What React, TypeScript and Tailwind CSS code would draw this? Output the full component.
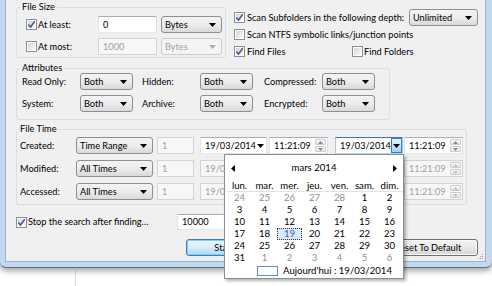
import React from "react";

type Dir = "down" | "up" | "left" | "right";

const Tri = ({ color = "#000", dir = "down", small = false }: { color?: string; dir?: Dir; small?: boolean }) => {
  const a = small ? 5 : 7;
  const b = small ? 3 : 4;
  const horiz = dir === "down" || dir === "up";
  const w = horiz ? a : b;
  const h = horiz ? b : a;
  const pts =
    dir === "down"
      ? `0,0 ${a},0 ${a / 2},${b}`
      : dir === "up"
      ? `0,${b} ${a},${b} ${a / 2},0`
      : dir === "left"
      ? `${b},0 ${b},${a} 0,${a / 2}`
      : `0,0 0,${a} ${b},${a / 2}`;
  return (
    <svg width={w} height={h} viewBox={`0 0 ${w} ${h}`} className="shrink-0 block">
      <polygon points={pts} fill={color} />
    </svg>
  );
};

const Check = ({ checked = false }: { checked?: boolean }) => (
  <span className="w-[11px] h-[11px] shrink-0 border border-[#8e8f8f] bg-white p-[1px] flex">
    <span className="relative flex-1 bg-gradient-to-br from-[#d6d6d6] to-[#f8f8f8]">
      {checked && (
        <svg width="9" height="9" viewBox="0 0 9 9" className="absolute -left-[1px] -top-[1px]">
          <path d="M1.3 4.4 L3.5 7 L7.8 1.2" stroke="#3c5a94" strokeWidth="1.5" fill="none" />
        </svg>
      )}
    </span>
  </span>
);

const Combo = ({ text, className = "", disabled = false }: { text: string; className?: string; disabled?: boolean }) => (
  <div
    className={`h-[17px] shrink-0 rounded-[3px] border flex items-center pl-[3px] pr-[5px] ${
      disabled
        ? "border-[#cacccd] bg-[#f4f4f4] text-[#a3a3a3]"
        : "border-[#8e8f8f] bg-gradient-to-b from-[#f4f4f4] via-[#ececec] to-[#dadada] text-black"
    } ${className}`}
  >
    <span className="flex-1">{text}</span>
    <Tri color={disabled ? "#b0b0b0" : "#000"} />
  </div>
);

const Edit = ({
  text,
  className = "",
  disabled = false,
  focused = false,
  children,
}: {
  text: string;
  className?: string;
  disabled?: boolean;
  focused?: boolean;
  children?: React.ReactNode;
}) => (
  <div
    className={`h-[17px] shrink-0 border flex items-center ${
      disabled
        ? "border-[#d3d3d3] bg-[#f7f7f7] text-[#a0a0a0]"
        : focused
        ? "border-[#3d7bad] border-b-[#b7d9ed] border-l-[#a4c9e3] border-r-[#a4c9e3] bg-white text-black"
        : "border-[#abadb3] border-b-[#e3e9ef] border-l-[#e2e3ea] border-r-[#dbdfe6] bg-white text-black"
    } ${className}`}
  >
    <span className="flex-1 pl-[4px]">{text}</span>
    {children}
  </div>
);

const Spinner = ({ disabled = false }: { disabled?: boolean }) => (
  <div className="w-[13px] self-stretch flex flex-col gap-[1px] p-[1px]">
    <div className="flex-1 rounded-[1px] border border-[#cdcdcd] bg-gradient-to-b from-[#f8f8f8] to-[#e6e6e6] flex items-center justify-center">
      <Tri small dir="up" color={disabled ? "#c3c3c3" : "#8a8a8a"} />
    </div>
    <div className="flex-1 rounded-[1px] border border-[#cdcdcd] bg-gradient-to-b from-[#f8f8f8] to-[#e6e6e6] flex items-center justify-center">
      <Tri small dir="down" color={disabled ? "#c3c3c3" : "#8a8a8a"} />
    </div>
  </div>
);

const DateField = ({ disabled = false, focused = false, className = "" }: { disabled?: boolean; focused?: boolean; className?: string }) => (
  <Edit text="19/03/2014" disabled={disabled} focused={focused} className={className}>
    {focused ? (
      <span className="w-[12px] self-stretch border border-[#3c7fb1] bg-gradient-to-b from-[#e6f4fc] via-[#c9e6f8] to-[#9fd3f2] flex items-center justify-center">
        <Tri />
      </span>
    ) : (
      <span className="w-[12px] flex items-center justify-center">
        <Tri color={disabled ? "#b0b0b0" : "#000"} />
      </span>
    )}
  </Edit>
);

const TimeField = ({ disabled = false, className = "" }: { disabled?: boolean; className?: string }) => (
  <Edit text="11:21:09" disabled={disabled} className={className}>
    <Spinner disabled={disabled} />
  </Edit>
);

const Group = ({
  title,
  className = "",
  legendClass = "px-[2px]",
  children,
}: {
  title: string;
  className?: string;
  legendClass?: string;
  children: React.ReactNode;
}) => (
  <fieldset className={`shrink-0 border border-[#d5dfe5] rounded-[3px] pl-[3px] ${className}`}>
    <legend className={`leading-[10px] ${legendClass}`}>{title}</legend>
    {children}
  </fieldset>
);

const calRows: number[][] = [
  [24, 25, 26, 27, 28, 1, 2],
  [3, 4, 5, 6, 7, 8, 9],
  [10, 11, 12, 13, 14, 15, 16],
  [17, 18, 19, 20, 21, 22, 23],
  [24, 25, 26, 27, 28, 29, 30],
  [31, 1, 2, 3, 4, 5, 6],
];
const dayNames = ["lun.", "mar.", "mer.", "jeu.", "ven.", "sam.", "dim."];

const TimeRow = ({ label, mode, active }: { label: string; mode: string; active: boolean }) => (
  <div className="flex items-center h-[17px]">
    <span className="w-[56px] shrink-0">{label}</span>
    <Combo text={mode} className="w-[77px]" />
    <Edit text="1" disabled className="w-[37px] ml-[4px]" />
    <DateField disabled={!active} className="w-[67px] ml-[6px]" />
    <TimeField disabled={!active} className="w-[59px] ml-[2px]" />
    <DateField disabled={!active} focused={active} className="w-[68px] ml-[7px]" />
    <TimeField disabled={!active} className="w-[59px] ml-[1px]" />
  </div>
);

export default function App() {
  return (
    <div className="relative w-[492px] h-[286px] overflow-hidden bg-white font-['Lato','Open_Sans',Arial,sans-serif] text-[9.2px] leading-none text-black whitespace-nowrap">
      {/* something behind the window */}
      <div className="absolute left-[75px] top-[270px] w-[1px] h-[16px] bg-[#dcdcdc]" />

      {/* window */}
      <div className="relative w-[492px] h-[268px] bg-[#c2d8ef] pl-[5px] pr-[6px] pb-[5px] rounded-b-[6px] border-b border-[#5e7088] shadow-[0_2px_7px_rgba(0,0,0,0.45)] flex">
        <div className="relative flex-1 bg-[#f0f0f0] border-l border-r border-b border-[#9db3cd] flex flex-col pl-[10px]">
          {/* top section */}
          <div className="flex h-[61px] shrink-0">
            <Group title="File Size" className="mt-[2px] w-[210px] h-[56px]">
              <div className="pl-[6px] pt-[4px] flex flex-col gap-[5px]">
                <div className="flex items-center h-[17px]">
                  <Check checked />
                  <span className="w-[60px] ml-[1px]">At least:</span>
                  <Edit text="0" className="w-[59px]" />
                  <Combo text="Bytes" className="w-[61px] ml-[4px]" />
                </div>
                <div className="flex items-center h-[17px]">
                  <Check />
                  <span className="w-[60px] ml-[1px]">At most:</span>
                  <Edit text="1000" disabled className="w-[59px]" />
                  <Combo text="Bytes" disabled className="w-[61px] ml-[4px]" />
                </div>
              </div>
            </Group>

            <div className="ml-[8px] pt-[9px] w-[244px] flex flex-col">
              <div className="flex items-center h-[17px]">
                <Check checked />
                <span className="ml-[2px]">Scan Subfolders in the following depth:</span>
                <Combo text="Unlimited" className="w-[69px] ml-auto" />
              </div>
              <div className="flex items-center h-[17px]">
                <Check />
                <span className="ml-[2px]">Scan NTFS symbolic links/junction points</span>
              </div>
              <div className="flex items-center h-[17px]">
                <div className="flex items-center w-[118px]">
                  <Check checked />
                  <span className="ml-[2px]">Find Files</span>
                </div>
                <Check />
                <span className="ml-[1px]">Find Folders</span>
              </div>
            </div>
          </div>

          {/* attributes */}
          <Group title="Attributes" className="mt-[2px] w-[374px]">
            <div className="pl-[2px] flex flex-col gap-[5px] pb-[7px]">
              <div className="flex items-center h-[17px]">
                <span className="w-[58px]">Read Only:</span>
                <Combo text="Both" className="w-[53px]" />
                <span className="w-[58px] ml-[9px]">Hidden:</span>
                <Combo text="Both" className="w-[53px]" />
                <span className="w-[58px] ml-[11px]">Compressed:</span>
                <Combo text="Both" className="w-[53px]" />
              </div>
              <div className="flex items-center h-[17px]">
                <span className="w-[58px]">System:</span>
                <Combo text="Both" className="w-[53px]" />
                <span className="w-[58px] ml-[9px]">Archive:</span>
                <Combo text="Both" className="w-[53px]" />
                <span className="w-[58px] ml-[11px]">Encrypted:</span>
                <Combo text="Both" className="w-[53px]" />
              </div>
            </div>
          </Group>

          {/* file time */}
          <Group title="File Time" className="mt-[4px] w-[451px]" legendClass="px-[0px]">
            <div className="pt-[3px] pb-[4px] flex flex-col gap-[6px]">
              <TimeRow label="Created:" mode="Time Range" active />
              <TimeRow label="Modified:" mode="All Times" active={false} />
              <TimeRow label="Accessed:" mode="All Times" active={false} />
            </div>
          </Group>

          {/* stop row */}
          <div className="flex items-center h-[16px] mt-[9px] shrink-0">
            <Check checked />
            <span className="w-[149px] ml-[1px]">Stop the search after finding…</span>
            <Edit text="10000" className="w-[75px] !h-[16px]" />
          </div>

          {/* buttons */}
          <div className="flex items-center h-[17px] mt-[9px] shrink-0">
            <div className="ml-[170px] w-[76px] h-[17px] rounded-[3px] border border-[#3c7fb1] bg-gradient-to-b from-[#ecf7fd] via-[#d6eefc] to-[#a9daf6] shadow-[inset_0_0_0_1px_#7fd0f8] flex items-center justify-center">
              Start
            </div>
            <div className="ml-[116px] w-[100px] h-[17px] rounded-[3px] border border-[#707070] bg-gradient-to-b from-[#f3f3f3] via-[#e8e8e8] to-[#d5d5d5] shadow-[inset_0_0_0_1px_#fbfbfb] flex items-center justify-center">
              Reset To Default
            </div>
          </div>

          {/* resize grip */}
          <svg width="7" height="7" viewBox="0 0 7 7" className="absolute right-[1px] bottom-[1px]">
            {[
              [5, 1],
              [3, 3],
              [5, 3],
              [1, 5],
              [3, 5],
              [5, 5],
            ].map(([x, y], i) => (
              <rect key={i} x={x} y={y} width="1" height="1" fill="#9a9a9a" />
            ))}
          </svg>
        </div>
      </div>

      {/* calendar popup */}
      <div className="absolute left-[224px] top-[154px] w-[180px] h-[125px] bg-white border border-[#8c8c8c] shadow-[2px_2px_3px_rgba(0,0,0,0.3)] flex flex-col text-[9.6px]">
        <div className="flex items-center h-[16px] mt-[5px] px-[6px]">
          <Tri dir="left" />
          <span className="flex-1 text-center">mars 2014</span>
          <Tri dir="right" />
        </div>
        <div className="grid grid-cols-[repeat(7,25px)] ml-[2px] mt-[4px] h-[12px] border-b border-[#e2e2e2] items-center">
          {dayNames.map((d) => (
            <span key={d} className="text-center">
              {d}
            </span>
          ))}
        </div>
        {calRows.map((row, r) => (
          <div key={r} className="grid grid-cols-[repeat(7,25px)] ml-[2px] h-[12px] items-center">
            {row.map((d, c) => {
              const gray = (r === 0 && d > 20) || (r === 5 && d < 10);
              const sel = r === 3 && d === 19;
              return sel ? (
                <span key={c} className="h-[12px] border border-dotted border-[#333] bg-[#dce9fa] text-[#2f64b8] flex items-center justify-center">
                  {d}
                </span>
              ) : (
                <span key={c} className={`text-center ${gray ? "text-[#8f8f8f]" : "text-black"}`}>
                  {d}
                </span>
              );
            })}
          </div>
        ))}
        <div className="flex items-center h-[10px] mt-[2px]">
          <span className="ml-[32px] w-[21px] h-[10px] border border-[#5b8fd5]" />
          <span className="ml-[5px]">Aujourd'hui : 19/03/2014</span>
        </div>
      </div>
    </div>
  );
}
